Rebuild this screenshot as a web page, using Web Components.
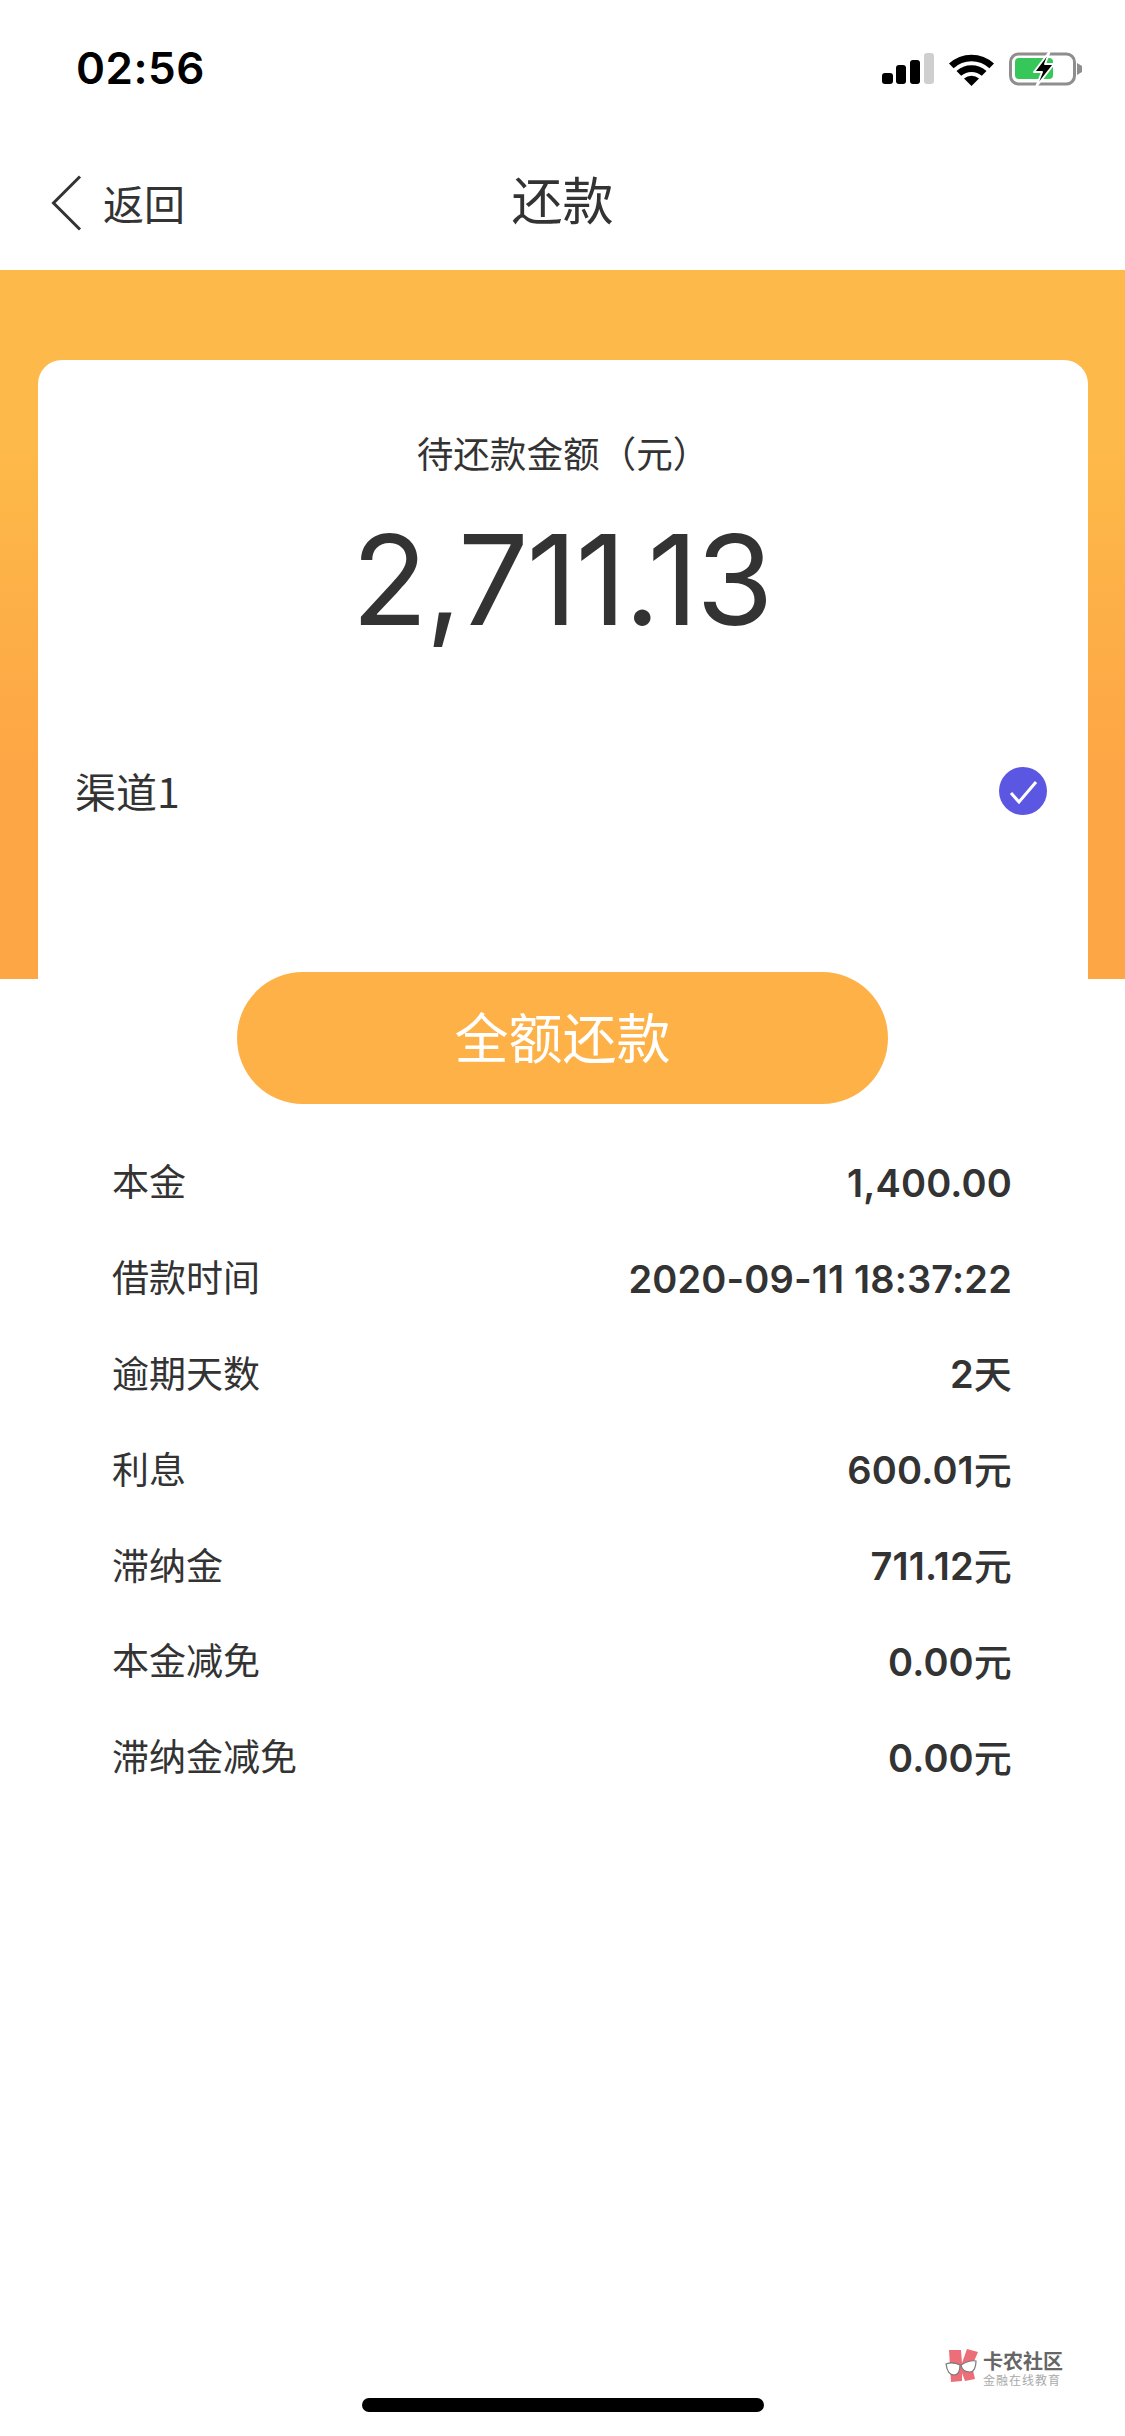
<!DOCTYPE html>
<html lang="zh-CN">
<head>
<meta charset="utf-8">
<title>还款</title>
<style>
html,body{margin:0;padding:0;background:#fff}
body{font-family:"Noto Sans CJK SC","Inter",sans-serif;color:#333}
</style>
</head>
<body>
<repay-page>
  <status-bar time="02:56"></status-bar>
  <nav-bar title="还款" back="返回"></nav-bar>
  <amount-card label="待还款金额（元）" amount="2,711.13" channel="渠道1"></amount-card>
  <pay-button>全额还款</pay-button>
  <detail-list>
    <detail-row label="本金" value="1,400.00"></detail-row>
    <detail-row label="借款时间" value="2020-09-11 18:37:22"></detail-row>
    <detail-row label="逾期天数" value="2" unit="天"></detail-row>
    <detail-row label="利息" value="600.01" unit="元"></detail-row>
    <detail-row label="滞纳金" value="711.12" unit="元"></detail-row>
    <detail-row label="本金减免" value="0.00" unit="元"></detail-row>
    <detail-row label="滞纳金减免" value="0.00" unit="元"></detail-row>
  </detail-list>
  <home-indicator></home-indicator>
  <water-mark></water-mark>
</repay-page>
<script>
function def(name, css, html){
  customElements.define(name, class extends HTMLElement{
    connectedCallback(){
      if(this.shadowRoot) return;
      const r=this.attachShadow({mode:'open'});
      const a=n=>this.getAttribute(n)||'';
      r.innerHTML='<style>'+css+'</style>'+html(a);
    }
  });
}
def('repay-page',
 `:host{display:flex;flex-direction:column;position:relative;width:1125px;height:2436px;overflow:hidden;background:#fff}`,
 ()=>`<slot></slot>`);
def('status-bar',
 `:host{display:flex;justify-content:space-between;align-items:center;height:138px;box-sizing:border-box;padding:0 40px 2px 76px}
  .t{font:600 44px/1 "Inter",sans-serif;color:#000;letter-spacing:.5px}
  svg{display:block}`,
 a=>`<span class="t">${a('time')}</span>
 <svg width="205" height="40" viewBox="880 48 205 40">
  <rect x="882" y="73" width="11" height="11" rx="3" fill="#000"/>
  <rect x="896" y="65" width="10" height="19" rx="3" fill="#000"/>
  <rect x="910" y="60" width="10" height="24" rx="3" fill="#000"/>
  <rect x="924" y="53" width="10" height="31" rx="3" fill="#cfcfcf"/>
  <path d="M949 63.5a33 33 0 0 1 45 0l-4.6 4.8a26 26 0 0 0-35.8 0z" fill="#000"/>
  <path d="M956.5 71a22.5 22.5 0 0 1 30 0l-4.7 4.8a15.5 15.5 0 0 0-20.6 0z" fill="#000"/>
  <path d="M964 78.5a11.5 11.5 0 0 1 15 0l-7.5 7.5z" fill="#000"/>
  <rect x="1010.5" y="54" width="64" height="30" rx="8" fill="none" stroke="#8e8e8e" stroke-width="3"/>
  <path d="M1077 63l5 3v6l-5 3z" fill="#8e8e8e"/>
  <rect x="1015" y="58" width="38" height="21" rx="4" fill="#35c759"/>
  <path d="M1050 51L1034 72h8l-6 15 18-23h-9z" fill="#000" stroke="#fff" stroke-width="2" stroke-linejoin="round"/>
 </svg>`);
def('nav-bar',
 `:host{display:block;position:relative;height:132px}
  .b{display:flex;align-items:center;height:124px;padding-left:50px;gap:21px;font-size:41px;color:#333}
  .b span{padding-top:3px}
  .b svg{display:block;margin-top:6px}
  .title{position:absolute;left:0;right:0;top:0;height:120px;display:flex;align-items:center;justify-content:center;font-size:51px;color:#333}`,
 a=>`<div class="b"><svg width="32" height="56" viewBox="0 0 32 56"><path d="M30 1.5L3.5 28 30 54.5" fill="none" stroke="#333" stroke-width="3"/></svg><span>${a('back')}</span></div>
 <div class="title">${a('title')}</div>`);
def('amount-card',
 `:host{display:block;height:709px;box-sizing:border-box;padding:90px 37px 0 38px;background:linear-gradient(#FDBA4B 0%,#FDB949 25%,#FDA645 70%,#FDA645 100%)}
  .card{height:100%;background:#fff;border-radius:24px 24px 0 0;box-sizing:border-box;display:flex;flex-direction:column;align-items:stretch;padding-top:68px}
  .l{text-align:center;font-size:36.6px;line-height:50px;color:#333}
  .a{text-align:center;font:400 125px/150px "Inter",sans-serif;color:#333;margin-top:27px;letter-spacing:-2px;padding-right:3px}
  .c{display:flex;justify-content:space-between;align-items:center;margin-top:107px;padding:0 41px 0 37px;font-size:41px;color:#333}
  .c span{margin-top:-2px}
  svg{display:block}`,
 a=>`<div class="card"><div class="l">${a('label')}</div><div class="a">${a('amount')}</div>
 <div class="c"><span>${a('channel')}</span>
 <svg width="48" height="48" viewBox="0 0 48 48"><circle cx="24" cy="24" r="24" fill="#5B57E2"/><path d="M12 26l8 9 17-20" fill="none" stroke="#fff" stroke-width="3"/></svg></div></div>`);
def('pay-button',
 `:host{display:flex;align-items:center;justify-content:center;align-self:center;position:relative;width:651px;height:132px;box-sizing:border-box;padding-bottom:6px;margin-top:-7px;border-radius:66px;background:#FDB147;color:#fff;font-size:54px}`,
 ()=>`<slot></slot>`);
def('detail-list',
 `:host{display:flex;flex-direction:column;padding:30px 113px 0 112px}`,
 ()=>`<slot></slot>`);
def('detail-row',
 `:host{display:flex;justify-content:space-between;align-items:center;height:95.8px;font-size:37px;color:#333}
  .k{margin-top:-3px}
  .v{font-family:"Inter",sans-serif;font-weight:600;font-size:38px;line-height:48px;letter-spacing:.15px}
  .u{font-family:"Noto Sans CJK SC",sans-serif;font-weight:500}`,
 a=>`<span class="k">${a('label')}</span><span class="v">${a('value')}<span class="u">${a('unit')}</span></span>`);
def('home-indicator',
 `:host{display:block;width:402px;height:14px;border-radius:7px;background:#000;position:absolute;left:362px;top:2398px}`,
 ()=>``);
def('water-mark',
 `:host{position:absolute;left:945px;top:2349px;display:flex;gap:5px}
  svg{display:block}
  .a{font-size:20px;line-height:20px;font-weight:700;color:#666;margin-top:2px;letter-spacing:0}
  .b{font-size:12px;line-height:14px;color:#aaa;letter-spacing:1px;margin-top:2px}`,
 ()=>`<svg width="33" height="34" viewBox="0 0 33 34">
 <path d="M4 1L16 1 17 14 22 0 33 3 27 17 30 30 20 32 17 24 17 32 6 33Z" fill="#EC6E78"/>
 <path d="M1 15C6 13 11 14 15 16 15 22 13 26 9 26 5 26 2 22 1 15Z" fill="#fff" stroke="#777" stroke-width="1.2"/>
 <path d="M16 16C21 13 26 11 31 12 31 18 29 23 25 23 20 23 17 21 16 16Z" fill="#fff" stroke="#777" stroke-width="1.2"/>
 </svg><div><div class="a">卡农社区</div><div class="b">金融在线教育</div></div>`);
</script>
</body>
</html>
